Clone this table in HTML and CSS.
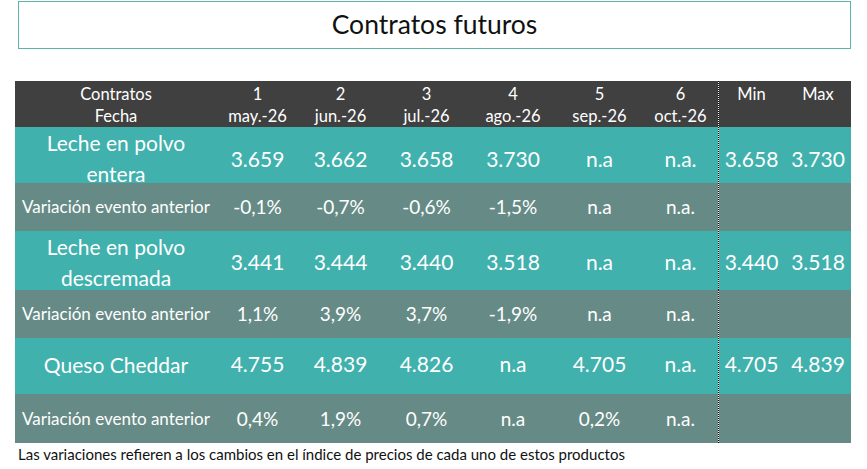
FILE: index.html
```html
<!DOCTYPE html>
<html lang="es">
<head>
<meta charset="utf-8">
<title>Contratos futuros</title>
<link rel="stylesheet" href="styles.css">
</head>
<body>
<div class="page">
  <div class="title">Contratos futuros</div>
  <div class="table">
    <div class="row head">
      <div class="cell label"><span>Contratos</span><span>Fecha</span></div>
      <div class="cell"><span>1</span><span>may.-26</span></div>
      <div class="cell"><span>2</span><span>jun.-26</span></div>
      <div class="cell"><span>3</span><span>jul.-26</span></div>
      <div class="cell"><span>4</span><span>ago.-26</span></div>
      <div class="cell"><span>5</span><span>sep.-26</span></div>
      <div class="cell"><span>6</span><span>oct.-26</span></div>
      <div class="cell sep top"><span>Min</span></div>
      <div class="cell top"><span>Max</span></div>
    </div>
    <div class="row prod r1">
      <div class="cell label">Leche en polvo<br>entera</div>
      <div class="cell">3.659</div>
      <div class="cell">3.662</div>
      <div class="cell">3.658</div>
      <div class="cell">3.730</div>
      <div class="cell">n.a</div>
      <div class="cell">n.a.</div>
      <div class="cell sep">3.658</div>
      <div class="cell">3.730</div>
    </div>
    <div class="row var r2">
      <div class="cell label">Variación evento anterior</div>
      <div class="cell">-0,1%</div>
      <div class="cell">-0,7%</div>
      <div class="cell">-0,6%</div>
      <div class="cell">-1,5%</div>
      <div class="cell">n.a</div>
      <div class="cell">n.a.</div>
      <div class="cell sep"></div>
      <div class="cell"></div>
    </div>
    <div class="row prod r3">
      <div class="cell label">Leche en polvo<br>descremada</div>
      <div class="cell">3.441</div>
      <div class="cell">3.444</div>
      <div class="cell">3.440</div>
      <div class="cell">3.518</div>
      <div class="cell">n.a</div>
      <div class="cell">n.a.</div>
      <div class="cell sep">3.440</div>
      <div class="cell">3.518</div>
    </div>
    <div class="row var r4">
      <div class="cell label">Variación evento anterior</div>
      <div class="cell">1,1%</div>
      <div class="cell">3,9%</div>
      <div class="cell">3,7%</div>
      <div class="cell">-1,9%</div>
      <div class="cell">n.a</div>
      <div class="cell">n.a.</div>
      <div class="cell sep"></div>
      <div class="cell"></div>
    </div>
    <div class="row prod r5">
      <div class="cell label">Queso Cheddar</div>
      <div class="cell">4.755</div>
      <div class="cell">4.839</div>
      <div class="cell">4.826</div>
      <div class="cell">n.a</div>
      <div class="cell">4.705</div>
      <div class="cell">n.a.</div>
      <div class="cell sep">4.705</div>
      <div class="cell">4.839</div>
    </div>
    <div class="row var r6">
      <div class="cell label">Variación evento anterior</div>
      <div class="cell">0,4%</div>
      <div class="cell">1,9%</div>
      <div class="cell">0,7%</div>
      <div class="cell">n.a</div>
      <div class="cell">0,2%</div>
      <div class="cell">n.a.</div>
      <div class="cell sep"></div>
      <div class="cell"></div>
    </div>
  </div>
  <p class="note">Las variaciones refieren a los cambios en el índice de precios de cada uno de estos productos</p>
</div>
</body>
</html>
```

FILE: styles.css
```css
* { box-sizing: border-box; }

html, body {
  margin: 0;
  padding: 0;
  background: #ffffff;
}

body {
  font-family: Lato, "Open Sans", "Liberation Sans", sans-serif;
  color: #000;
}

.page {
  width: 867px;
  padding-top: 1px;
}

.title {
  margin: 0 16px 0 18px;
  height: 48px;
  border: 1px solid #5bb4a6;
  display: flex;
  align-items: center;
  justify-content: center;
  font-size: 26.5px;
  color: #111;
  padding-bottom: 2px;
}

.table {
  margin: 32px 0 0 15px;
  width: 836px;
  display: flex;
  flex-direction: column;
}

.row {
  display: grid;
  grid-template-columns: 202px 81px 85px 87px 86px 87px 75px 67px 66px;
  color: #ffffff;
}

.cell {
  display: flex;
  flex-direction: column;
  align-items: center;
  justify-content: center;
  text-align: center;
  white-space: nowrap;
}

.sep {
  background-image: repeating-linear-gradient(to bottom, #000 0 1px, #fff 1px 2px);
  background-size: 1px 100%;
  background-repeat: no-repeat;
  background-position: left top;
}

.head {
  background: #404040;
  height: 46px;
  font-size: 16.5px;
  line-height: 22px;
}

.head .cell {
  justify-content: flex-start;
  padding-top: 2px;
}

.prod {
  background: #40b1ad;
  font-size: 21px;
}

.prod .cell {
  padding-bottom: 5px;
}

.prod .label {
  line-height: 31px;
  padding-bottom: 4px;
}

.r1 .cell {
  padding-bottom: 9px;
}

.r1 .label {
  padding-bottom: 10px;
}

.var {
  background: #668b86;
  font-size: 19px;
}

.var .cell {
  padding-bottom: 1px;
}

.var .label {
  font-size: 17px;
}

.r1 { height: 56px; }
.r2 { height: 48px; }
.r3 { height: 59px; }
.r4 { height: 48px; }
.r5 { height: 56px; }
.r6 { height: 49px; }

.note {
  margin: 2px 0 0 18px;
  font-size: 15px;
  line-height: 18px;
  color: #111;
}
```
